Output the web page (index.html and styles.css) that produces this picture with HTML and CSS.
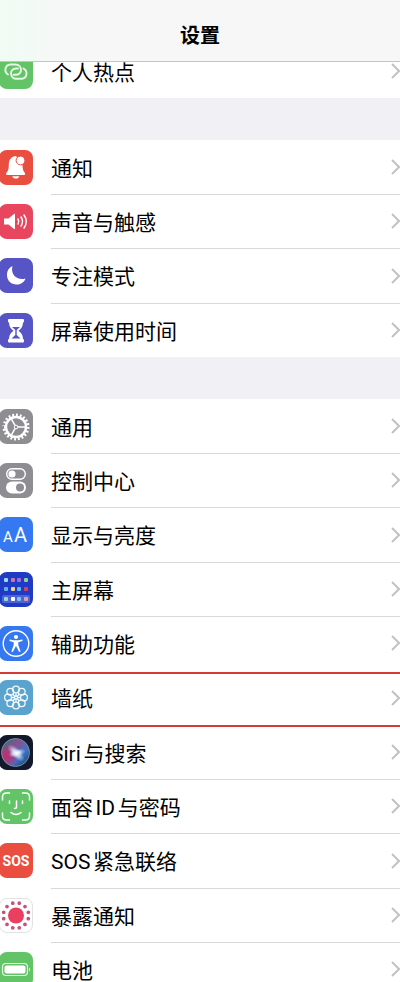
FILE: index.html
```html
<!DOCTYPE html>
<html lang="zh-CN">
<head>
  <meta charset="UTF-8">
  <meta name="viewport" content="width=device-width, initial-scale=1">
  <title>设置</title>
  <link rel="stylesheet" href="styles.css">
</head>
<body>
  <div class="screen">
    <header class="navbar">
      <h1>设置</h1>
    </header>

    <main class="settings">
      <ul class="group">
        <li class="row">
          <a href="#hotspot">
            <svg class="icon green" viewBox="0 0 34 35">
              <g fill="none" stroke="#e6f8e6" stroke-width="1.900" stroke-linecap="round">
                <path d="M9 20.500 C5 18 5.500 10.800 11.500 10.500 H16.500 C23.500 10.500 24 20.500 17 20.800 H14.500"/>
                <path d="M24.500 14.500 C29 17 28.500 24.500 22.500 24.800 H17.500 C10.500 24.800 10 14.800 17 14.500 H19"/>
              </g>
            </svg>
            <span class="label">个人热点</span>
            <svg class="chevron" viewBox="0 0 9 16"><path d="M1 1 L8 8 L1 15"/></svg>
          </a>
        </li>
      </ul>

      <ul class="group">
        <li class="row">
          <a href="#notifications">
            <svg class="icon red" viewBox="0 0 34 35">
              <path fill="#fff" d="M17 6 C11.500 6.500 9.800 10.500 9.800 15 C9.800 19.500 9 21 7.300 23 C6.700 24 7 25 8.200 25 L25 25 C26.300 25 26.500 24 25.900 23 C24.200 21 23.500 19 23.500 15 Z"/>
              <path fill="#fff" d="M13.300 26.200 h7 c-.5 3.200-6.500 3.200-7 0 Z"/>
              <circle cx="21.500" cy="10.500" r="4.400" fill="#fff" stroke="#e94e40"/>
            </svg>
            <span class="label">通知</span>
            <svg class="chevron" viewBox="0 0 9 16"><path d="M1 1 L8 8 L1 15"/></svg>
          </a>
        </li>
        <li class="row">
          <a href="#sounds">
            <svg class="icon pink" viewBox="0 0 34 35">
              <path fill="#fff" d="M5 14.500 h4.500 L15 10 q1-.5 1 .8 v13.400 q0 1.300-1 .8 L9.500 20.500 H5 Z"/>
              <g fill="none" stroke="#fff" stroke-width="1.500" stroke-linecap="round">
                <path d="M19 15 q1.600 2.500 0 5"/>
                <path d="M22 13 q3 4.500 0 9"/>
                <path d="M25 11 q4.600 6.500 0 13"/>
              </g>
            </svg>
            <span class="label">声音与触感</span>
            <svg class="chevron" viewBox="0 0 9 16"><path d="M1 1 L8 8 L1 15"/></svg>
          </a>
        </li>
        <li class="row">
          <a href="#focus">
            <svg class="icon indigo" viewBox="0 0 34 35">
              <path fill="#fff" d="M13.500 8 C10 9.500 8 13 8 17 C8 22.500 12 26.500 17.500 26.500 C21.500 26.500 25 24.500 26.500 20.500 C19 23 11 17 13.500 8 Z"/>
            </svg>
            <span class="label">专注模式</span>
            <svg class="chevron" viewBox="0 0 9 16"><path d="M1 1 L8 8 L1 15"/></svg>
          </a>
        </li>
        <li class="row">
          <a href="#screen-time">
            <svg class="icon indigo" viewBox="0 0 34 35">
              <path fill="#fff" d="M10 6 h14 q1 0 1 1 v1.500 q0 1-1 1 c0 4-2 6.500-4.500 8.300 c2.500 1.800 4.500 4.300 4.500 8.200 q1 0 1 1 v1.500 q0 1-1 1 H10 q-1 0-1-1 V27 q0-1 1-1 c0-4 2-6.400 4.500-8.200 C12 16 10 13.500 10 9.500 q-1 0-1-1 V7 q0-1 1-1 Z"/>
              <path fill="#5754c6" d="M13 14 h8 L17.700 17 V22 L21.500 25.500 H12.500 L16.300 22 V17 Z"/>
            </svg>
            <span class="label">屏幕使用时间</span>
            <svg class="chevron" viewBox="0 0 9 16"><path d="M1 1 L8 8 L1 15"/></svg>
          </a>
        </li>
      </ul>

      <ul class="group">
        <li class="row">
          <a href="#general">
            <svg class="icon gray" viewBox="0 0 34 35">
              <g fill="none" stroke="#fff">
                <circle cx="17" cy="18" r="12" stroke-width="3" pathLength="40" stroke-dasharray="1 1"/>
                <circle cx="17" cy="18" r="10" stroke-width="2.400"/>
                <circle cx="17" cy="18" r="1.800" stroke-width="1"/>
                <path stroke-width="1.500" d="M19 18 H27 M16 16.300 L12 9.400 M16 19.700 L12 26.600"/>
              </g>
            </svg>
            <span class="label">通用</span>
            <svg class="chevron" viewBox="0 0 9 16"><path d="M1 1 L8 8 L1 15"/></svg>
          </a>
        </li>
        <li class="row">
          <a href="#control-center">
            <svg class="icon gray" viewBox="0 0 34 35">
              <rect x="7.700" y="5.700" width="18.600" height="10.600" rx="5.300" fill="none" stroke="#fff" stroke-width="1.400"/>
              <circle cx="13" cy="11" r="3.600" fill="#fff"/>
              <rect x="7" y="18.500" width="20" height="12" rx="6" fill="#fff"/>
              <circle cx="21" cy="24.500" r="4" fill="#8e8e92"/>
            </svg>
            <span class="label">控制中心</span>
            <svg class="chevron" viewBox="0 0 9 16"><path d="M1 1 L8 8 L1 15"/></svg>
          </a>
        </li>
        <li class="row">
          <a href="#display">
            <svg class="icon blue" viewBox="0 0 34 35">
              <text x="4" y="25" class="glyph-small">A</text>
              <text x="15" y="25" class="glyph-large">A</text>
            </svg>
            <span class="label">显示与亮度</span>
            <svg class="chevron" viewBox="0 0 9 16"><path d="M1 1 L8 8 L1 15"/></svg>
          </a>
        </li>
        <li class="row">
          <a href="#home-screen">
            <svg class="icon navy" viewBox="0 0 34 35">
              <rect x="3" y="23" width="28" height="8" rx="2" fill="#4d63d6"/>
              <rect x="5" y="6" width="4" height="4" rx="1" fill="#9fd8f5"/>
              <rect x="12" y="6" width="4" height="4" rx="1" fill="#d071a8"/>
              <rect x="18" y="6" width="4" height="4" rx="1" fill="#a468e8"/>
              <rect x="25" y="6" width="4" height="4" rx="1" fill="#8ccf98"/>
              <rect x="5" y="15" width="4" height="4" rx="1" fill="#5fb0f0"/>
              <rect x="12" y="15" width="4" height="4" rx="1" fill="#ecd08e"/>
              <rect x="18" y="15" width="4" height="4" rx="1" fill="#62b4f2"/>
              <rect x="25" y="15" width="4" height="4" rx="1" fill="#d8405e"/>
              <rect x="5" y="25" width="4" height="4" rx="1" fill="#8ddcc8"/>
              <rect x="12" y="25" width="4" height="4" rx="1" fill="#fff"/>
              <rect x="18" y="25" width="4" height="4" rx="1" fill="#7cc4f4"/>
              <rect x="25" y="25" width="4" height="4" rx="1" fill="#e0a0a0"/>
            </svg>
            <span class="label">主屏幕</span>
            <svg class="chevron" viewBox="0 0 9 16"><path d="M1 1 L8 8 L1 15"/></svg>
          </a>
        </li>
        <li class="row">
          <a href="#accessibility">
            <svg class="icon blue" viewBox="0 0 34 35">
              <circle cx="17" cy="17.500" r="12.800" fill="none" stroke="#fff" stroke-width="1.400"/>
              <circle cx="17" cy="11" r="2.100" fill="#fff"/>
              <path fill="#fff" d="M10.500 13.500 L15 14.200 H19 L23.500 13.500 V15 L19.300 16.200 V19 L21.600 25.500 L20.200 26 L17.300 20.500 H16.700 L13.800 26 L12.400 25.500 L14.700 19 V16.200 L10.500 15 Z"/>
            </svg>
            <span class="label">辅助功能</span>
            <svg class="chevron" viewBox="0 0 9 16"><path d="M1 1 L8 8 L1 15"/></svg>
          </a>
        </li>
        <li class="row highlight">
          <a href="#wallpaper">
            <svg class="icon sky" viewBox="0 0 34 35">
              <g fill="none" stroke="#f0fafd" stroke-width="1.300">
                <circle cx="17" cy="9.500" r="3.400"/>
                <circle cx="22.700" cy="11.800" r="3.400"/>
                <circle cx="25" cy="17.500" r="3.400"/>
                <circle cx="22.700" cy="23.200" r="3.400"/>
                <circle cx="17" cy="25.500" r="3.400"/>
                <circle cx="11.300" cy="23.200" r="3.400"/>
                <circle cx="9" cy="17.500" r="3.400"/>
                <circle cx="11.300" cy="11.800" r="3.400"/>
                <circle cx="17" cy="17.500" r="1.500"/>
                <path d="M17 12.900 V16 M17 19 V22.100 M12.400 17.500 H15.500 M18.500 17.500 H21.600 M13.700 14.200 L16 16.500 M18 18.500 L20.300 20.800 M20.300 14.200 L18 16.500 M16 18.500 L13.700 20.800"/>
              </g>
            </svg>
            <span class="label">墙纸</span>
            <svg class="chevron" viewBox="0 0 9 16"><path d="M1 1 L8 8 L1 15"/></svg>
          </a>
        </li>
        <li class="row">
          <a href="#siri">
            <svg class="icon siri" viewBox="0 0 34 35">
              <defs>
                <linearGradient id="orb" x1="0" y1="0" x2="1" y2="1">
                  <stop offset="0" stop-color="#1f7a78"/>
                  <stop offset=".35" stop-color="#8a4f8c"/>
                  <stop offset=".65" stop-color="#3f74c8"/>
                  <stop offset="1" stop-color="#123a5c"/>
                </linearGradient>
                <radialGradient id="pink" cx=".2" cy=".65" r=".45">
                  <stop offset="0" stop-color="#c22c6c"/>
                  <stop offset="1" stop-color="#c22c6c" stop-opacity="0"/>
                </radialGradient>
                <radialGradient id="glow">
                  <stop offset="0" stop-color="#fff"/>
                  <stop offset=".35" stop-color="#e4f0fb" stop-opacity=".8"/>
                  <stop offset="1" stop-color="#b4d0f0" stop-opacity="0"/>
                </radialGradient>
              </defs>
              <circle cx="16.500" cy="17.500" r="14" fill="url(#orb)"/>
              <circle cx="16.500" cy="17.500" r="14" fill="url(#pink)" stroke="#7d9fa8" stroke-width=".8"/>
              <ellipse cx="17" cy="18" rx="11" ry="5" fill="url(#glow)" transform="rotate(45 17 18)"/>
              <ellipse cx="18" cy="18" rx="9" ry="4" fill="url(#glow)" transform="rotate(-15 18 18)"/>
            </svg>
            <span class="label">Siri与搜索</span>
            <svg class="chevron" viewBox="0 0 9 16"><path d="M1 1 L8 8 L1 15"/></svg>
          </a>
        </li>
        <li class="row">
          <a href="#face-id">
            <svg class="icon green" viewBox="0 0 34 35">
              <g fill="none" stroke="#fff" stroke-width="1.500" stroke-linecap="round">
                <path d="M3.500 11 V8 Q3.500 4 7.500 4 H10.500 M23.500 4 H26.500 Q30.500 4 30.500 8 V11 M30.500 24 V27 Q30.500 31 26.500 31 H23.500 M10.500 31 H7.500 Q3.500 31 3.500 27 V24"/>
                <path d="M10.500 12 V14.500 M23.500 12 V14.500 M17.500 12 V18 Q17.500 19.500 15.500 19.500 M12 23.500 Q17 27.500 22 23.500"/>
              </g>
            </svg>
            <span class="label">面容ID与密码</span>
            <svg class="chevron" viewBox="0 0 9 16"><path d="M1 1 L8 8 L1 15"/></svg>
          </a>
        </li>
        <li class="row">
          <a href="#sos">
            <svg class="icon red" viewBox="0 0 34 35">
              <text x="17" y="23" class="glyph-sos">SOS</text>
            </svg>
            <span class="label">SOS紧急联络</span>
            <svg class="chevron" viewBox="0 0 9 16"><path d="M1 1 L8 8 L1 15"/></svg>
          </a>
        </li>
        <li class="row">
          <a href="#exposure">
            <svg class="icon white" viewBox="0 0 34 35">
              <circle cx="17" cy="17.500" r="8.500" fill="#ea3f5f"/>
              <circle cx="17" cy="17.500" r="13.500" fill="none" stroke="#c6527a" stroke-width="4" stroke-linecap="round" pathLength="120" stroke-dasharray="0 10" stroke-dashoffset="5"/>
            </svg>
            <span class="label">暴露通知</span>
            <svg class="chevron" viewBox="0 0 9 16"><path d="M1 1 L8 8 L1 15"/></svg>
          </a>
        </li>
        <li class="row">
          <a href="#battery">
            <svg class="icon green" viewBox="0 0 34 35">
              <rect x="3.500" y="11.500" width="25" height="12" rx="3.500" fill="none" stroke="#e6f8e6" stroke-width="1.200"/>
              <rect x="5.500" y="13.500" width="21" height="8" rx="2" fill="#fff"/>
              <path d="M30 15.500 q2 2 0 4 Z" fill="#e6f8e6"/>
            </svg>
            <span class="label">电池</span>
            <svg class="chevron" viewBox="0 0 9 16"><path d="M1 1 L8 8 L1 15"/></svg>
          </a>
        </li>
      </ul>
    </main>
  </div>
</body>
</html>
```
FILE: styles.css
```css
* { box-sizing: border-box; }
body { margin: 0; background: #f0f0f5; color: #000; font-family: Roboto, "Noto Sans CJK SC", sans-serif; }

.screen { position: relative; height: 100vh; overflow: hidden; }

.navbar { position: absolute; top: 0; left: 0; right: 0; z-index: 2; height: 62px; padding-top: 21px; background: linear-gradient(90deg, #f0fcf4, #f7f7f7 20%); border-bottom: 1px solid #c4c4c6; text-align: center; }
.navbar h1 { margin: 0; font-size: 20px; line-height: 30px; font-weight: 700; }

/* the list is scrolled part way under the nav bar */
.settings { display: flex; flex-direction: column; gap: 42px; padding-top: 44px; }

.group { margin: 0; padding: 0; list-style: none; background: #fff; }
.row { position: relative; height: 54px; }
.row:nth-child(3n) { height: 55px; }
.row a { display: flex; align-items: center; gap: 18px; height: 100%; color: inherit; text-decoration: none; }

.label { flex: 1; align-self: stretch; display: flex; align-items: center; padding-top: 2px; font-size: 21px; line-height: 30px; text-autospace: normal; border-top: 1px solid #d9d9dc; margin-right: -27px; }
.row:first-child .label { border-color: transparent; }

.chevron { flex: none; width: 9px; height: 16px; fill: none; stroke: #c2c2c5; stroke-width: 2; }

.icon { flex: none; width: 34px; height: 35px; margin-left: -1px; border-radius: 8px; }
.green { background: #62c466; }
.red { background: #e94e40; }
.pink { background: #e8465f; }
.indigo { background: #5754c6; }
.gray { background: #8e8e92; }
.blue { background: #3578f0; }
.navy { background: #1f3bc4; }
.sky { background: #5aa3cf; }
.siri { background: #14182c; }
.white { background: #fff; border: 1px solid #e2e2e4; }

.glyph-small, .glyph-large { fill: #fff; font-size: 15px; }
.glyph-large { font-size: 20px; }
.glyph-sos { fill: #fff; font-family: "Liberation Sans Narrow", Roboto, sans-serif; font-size: 14px; font-weight: 700; text-anchor: middle; }

.highlight .label { border-color: transparent; }
.highlight::after { content: ""; position: absolute; inset: 2px 0 -2px; z-index: 1; border: solid #d63a35; border-width: 2px 0; pointer-events: none; }
```
